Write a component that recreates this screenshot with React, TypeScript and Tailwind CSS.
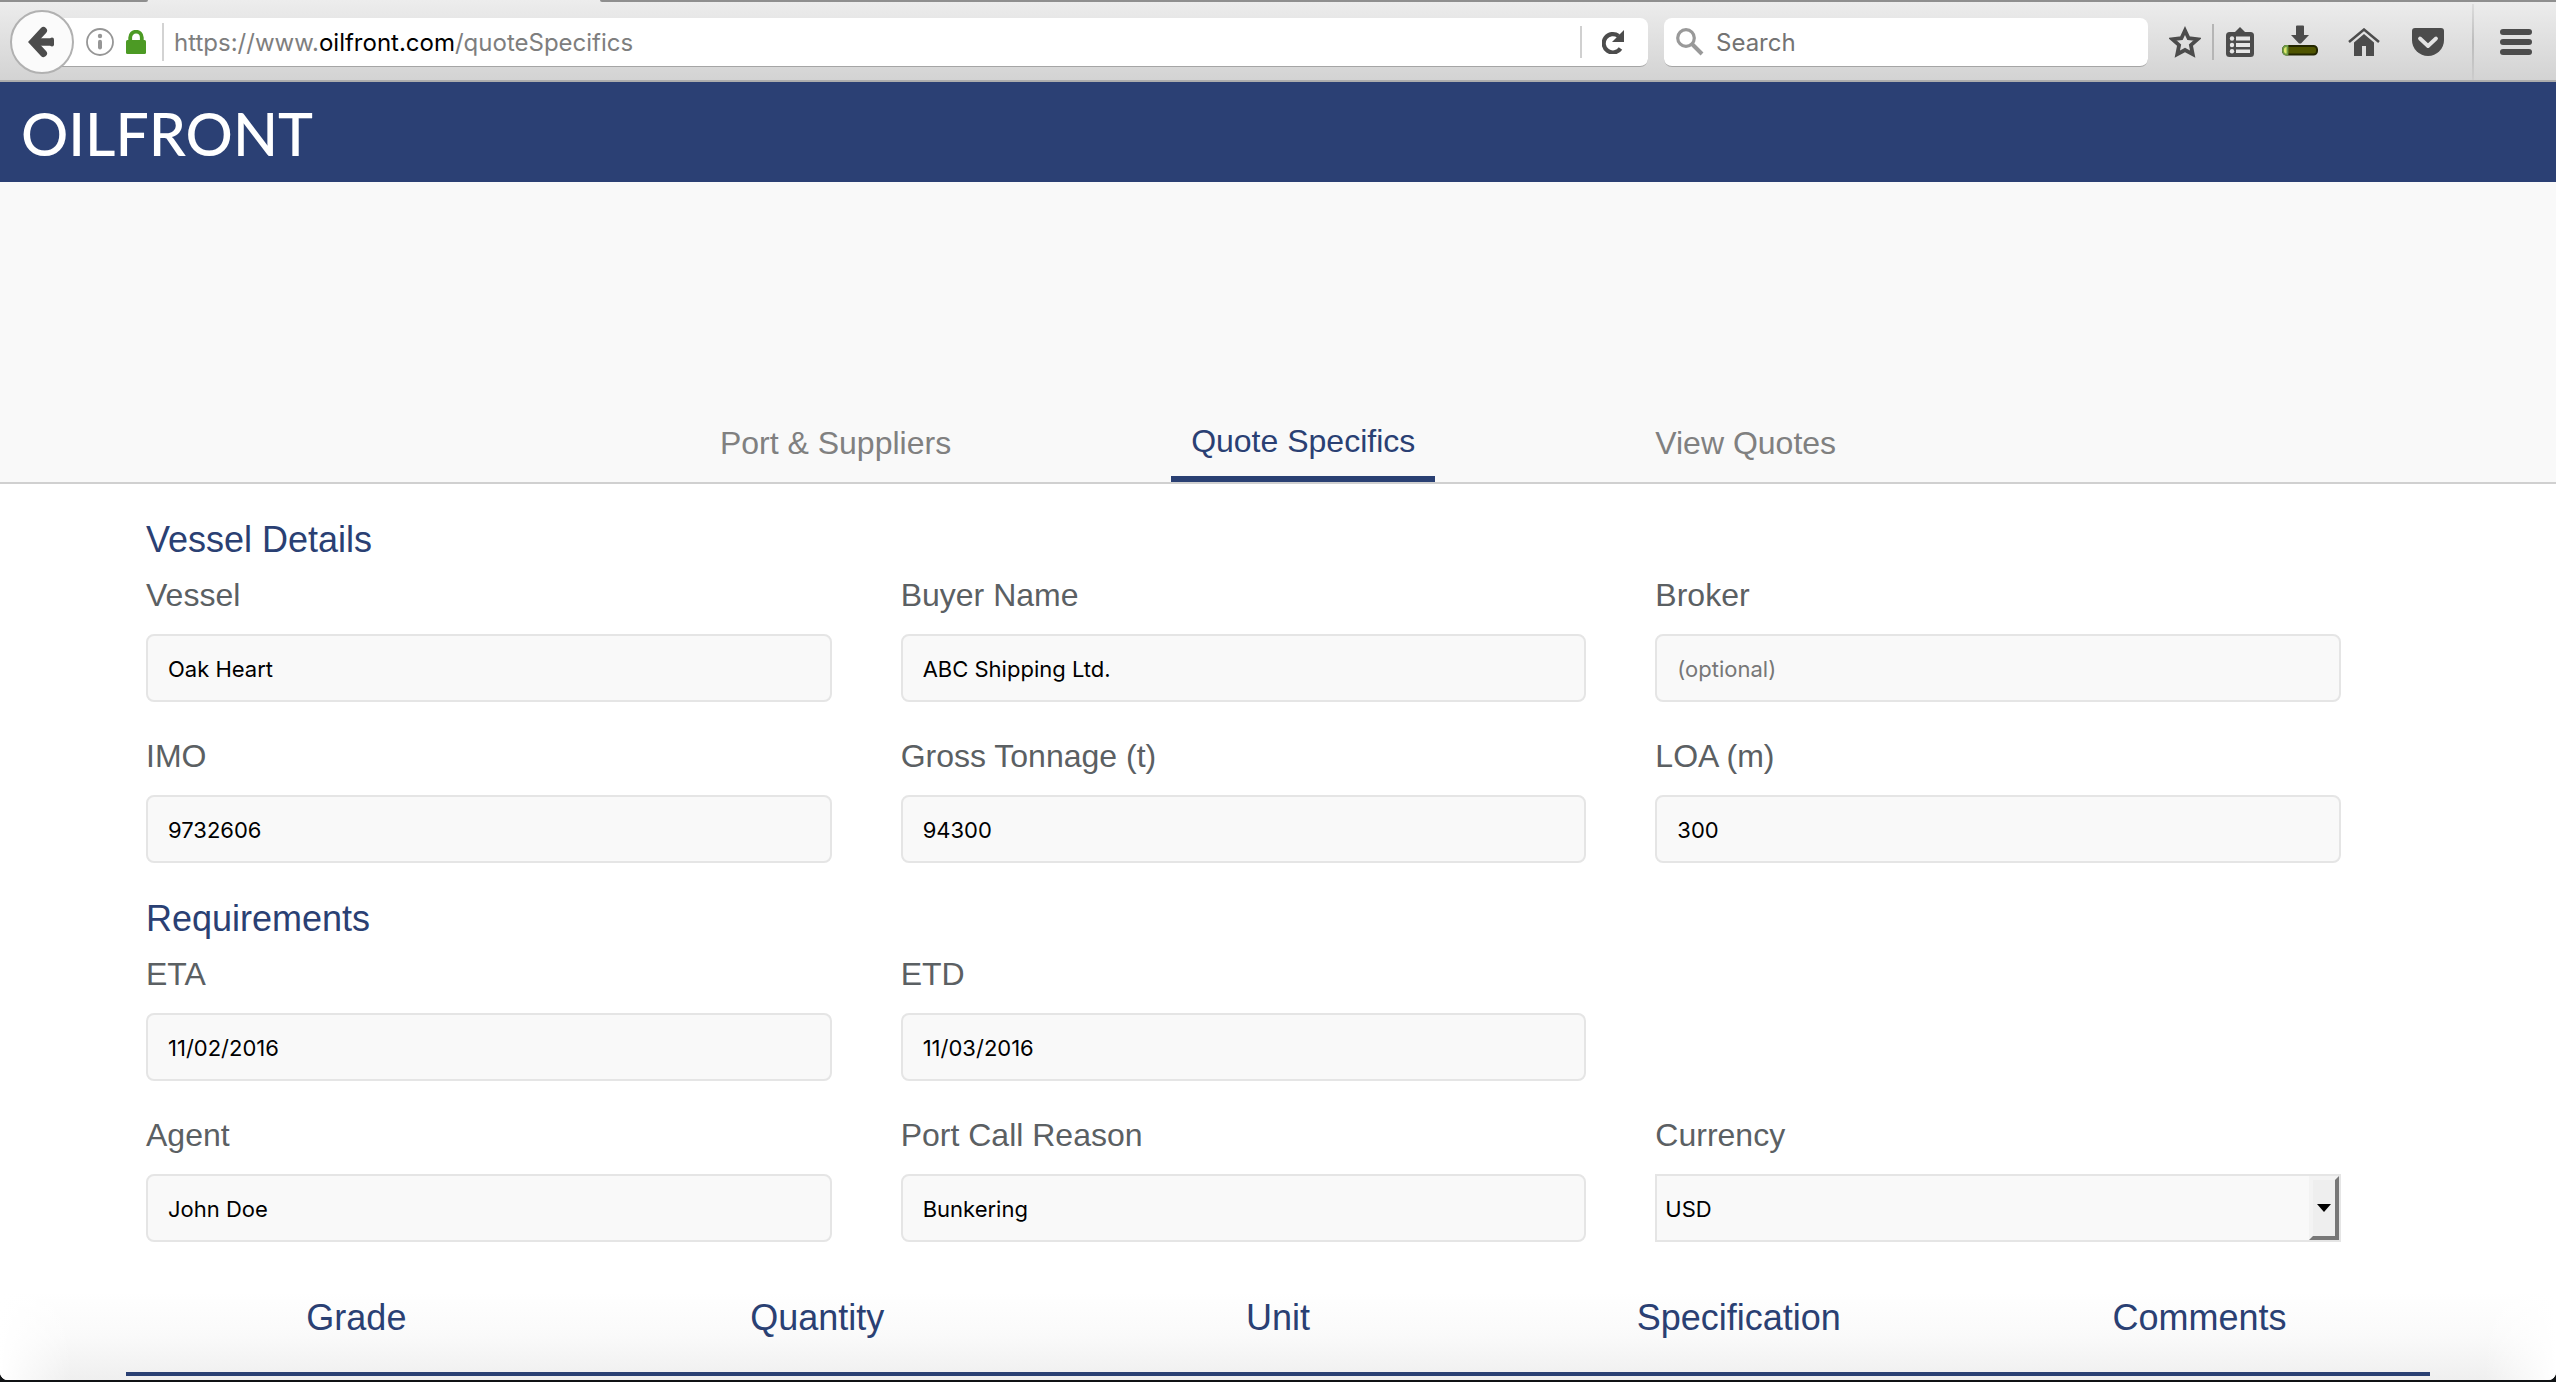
import React from "react";

const heading = "text-[36px] leading-[40px] text-[#2a4073]";

type FieldProps = { id: string; label: string; value?: string; placeholder?: string };

function Label({ id, children }: { id: string; children: React.ReactNode }) {
  return (
    <label htmlFor={id} className="mb-[21px] block text-[32px] leading-[36px] text-[#5b6063]">
      {children}
    </label>
  );
}

function Field({ id, label, value, placeholder }: FieldProps) {
  return (
    <div className="pr-[69px]">
      <Label id={id}>{label}</Label>
      <input
        id={id}
        type="text"
        defaultValue={value}
        placeholder={placeholder}
        className="block h-[68px] w-full rounded-[8px] border-2 border-[#e5e5e5] bg-[#f9f9f9] px-[20px] pt-[2px] font-['Inter',sans-serif] text-[22px] text-black outline-none placeholder:text-[#777]"
      />
    </div>
  );
}

function CurrencyField() {
  return (
    <div className="pr-[69px]">
      <Label id="currency">Currency</Label>
      <div className="relative">
        <select
          id="currency"
          defaultValue="USD"
          className="block h-[68px] w-full appearance-none border-2 border-[#e5e5e5] bg-[#f9f9f9] pt-[2px] pl-2 font-['Inter',sans-serif] text-[22px] text-black outline-none"
        >
          <option>USD</option>
          <option>EUR</option>
        </select>
        <span className="pointer-events-none absolute inset-y-[2px] right-[2px] flex w-[30px] items-center justify-center border-4 border-t-[#f3f3f3] border-r-[#777] border-b-[#777] border-l-[#f3f3f3] bg-[#eee]">
          <svg width="14" height="8" viewBox="0 0 14 8">
            <path d="M0 0h14L7 8z" fill="#000" />
          </svg>
        </span>
      </div>
    </div>
  );
}

function Toolbar() {
  return (
    <div className="relative flex h-[82px] items-center border-b-2 border-[#adadad] bg-linear-to-b from-[#ededed] to-[#d3d3d3] pt-[4px] pl-[10px] font-['Inter',sans-serif] text-[24px]">
      <div className="absolute top-0 left-0 h-[2px] w-[148px] rounded-br-[2px] bg-[#8f8f8f]" />
      <div className="absolute top-0 right-0 left-[600px] h-[2px] rounded-bl-[2px] bg-[#8f8f8f]" />
      <button aria-label="Back" className="z-10 grid size-[64px] shrink-0 place-items-center rounded-full border-2 border-[#b1b1b1] bg-[#fbfbfb]">
        <svg width="28" height="32" viewBox="0 0 28 32" fill="none" stroke="#4c4c4c" strokeWidth="7">
          <path d="M15.500 4.500 4.800 16l10.700 11.500" strokeLinecap="round" strokeLinejoin="miter" />
          <path d="M6 16h19" strokeWidth="7.500" />
          <path d="M24 13.500v5" strokeWidth="4" strokeLinecap="round" />
        </svg>
      </button>
      <div className="mt-[1px] -ml-[20px] flex h-[49px] flex-1 items-center rounded-r-[8px] border-b border-[#a5a5a5] bg-white pl-[32px]">
        <svg width="28" height="28" viewBox="0 0 28 28" className="shrink-0">
          <circle cx="14" cy="14" r="13" fill="none" stroke="#969696" strokeWidth="1.800" />
          <circle cx="14" cy="8" r="2.200" fill="#969696" />
          <path d="M14 13.800v5.600" stroke="#969696" strokeWidth="4" strokeLinecap="round" />
        </svg>
        <svg width="20" height="24" viewBox="0 0 20 24" className="ml-[12px] shrink-0">
          <path d="M4.200 12V7.500a5.800 5.800 0 0 1 11.600 0V12" fill="none" stroke="#4c9a24" strokeWidth="3.800" />
          <rect y="10" width="20" height="14" rx="1.500" fill="#4c9a24" />
        </svg>
        <span className="ml-[16px] h-[38px] w-[2px] bg-[#d3d3d3]" />
        <p className="ml-[10px] flex-1 pt-[2px] whitespace-nowrap text-[#7e7e7e]">
          https://www.<span className="text-black">oilfront.com</span>/quoteSpecifics
        </p>
        <span className="h-[32px] w-[2px] bg-[#d0d0d0]" />
        <button aria-label="Reload" className="mr-[24px] ml-[20px]">
          <svg width="22" height="24" viewBox="0 0 22 24">
            <path d="M18.500 18.500A9.200 9.200 0 1 1 16.500 6" fill="none" stroke="#4c4c4c" strokeWidth="4.200" />
            <path d="M22 0v12H10z" fill="#4c4c4c" />
          </svg>
        </button>
      </div>
      <label className="mt-[1px] ml-[16px] flex h-[49px] w-[484px] items-center rounded-[8px] border-b border-[#a5a5a5] bg-white pl-[12px]">
        <svg width="28" height="28" viewBox="0 0 28 28" fill="none" stroke="#999" className="shrink-0">
          <circle cx="10" cy="10" r="8.300" strokeWidth="3.200" />
          <path d="M16 16l10 10" strokeWidth="4" />
        </svg>
        <input aria-label="Search" placeholder="Search" className="ml-[12px] w-full min-w-0 pt-[2px] outline-none placeholder:text-[#737373]" />
      </label>
      <button aria-label="Bookmark this page" className="ml-[21px]">
        <svg width="32" height="32" viewBox="0 0 32 32" fill="none" stroke="#4c4c4c" strokeWidth="3.800">
          <path d="M16 4.500l3.600 7.700 9 1-6.700 6 1.800 9L16 24l-7.700 4.200 1.800-9-6.700-6 9-1z" />
        </svg>
      </button>
      <span className="ml-[11px] h-[36px] w-[2px] bg-[#b5b5b5]" />
      <button aria-label="Show bookmarks" className="ml-[12px]">
        <svg width="28" height="30" viewBox="0 0 28 30">
          <path d="M8 6l6-6 6 6z" fill="#4c4c4c" />
          <rect x="0" y="5" width="28" height="25" rx="3.500" fill="#4c4c4c" />
          <path d="M10 9.500h14v4H10zM10 16h14v4H10zM10 22.500h14v3.500H10z" fill="#e6e6e6" />
          <g fill="#e6e6e6">
            <circle cx="6" cy="11.500" r="2.200" />
            <circle cx="6" cy="18" r="2.200" />
            <circle cx="6" cy="24.300" r="2.200" />
          </g>
        </svg>
      </button>
      <button aria-label="Downloads" className="mb-[2px] ml-[28px]">
        <svg width="36" height="32" viewBox="0 0 36 32">
          <path d="M14 1.500q0-1 1-1h6q1 0 1 1V10h5l-8 8.500h-2L9 10h5z" fill="#4c4c4c" />
          <rect x="1" y="21" width="34" height="8.500" rx="3.500" fill="#4f5400" stroke="#232600" strokeWidth="2" />
          <path d="M5.500 21H4.500q-3.500 0-3.500 4.200t3.500 4.300h1z" fill="#dce86c" stroke="#6f9b45" strokeWidth="1.800" />
        </svg>
      </button>
      <button aria-label="Home" className="ml-[30px]">
        <svg width="32" height="28" viewBox="0 0 32 28">
          <path d="M1 14 16 1.500 31 14" fill="none" stroke="#4c4c4c" strokeWidth="2.500" />
          <path d="M6 14.500 16 6l10 8.500V28h-8V18h-4v10H6z" fill="#4c4c4c" />
        </svg>
      </button>
      <button aria-label="Save to Pocket" className="ml-[32px]">
        <svg width="32" height="28" viewBox="0 0 32 28">
          <path d="M3 0h26q3 0 3 3v9a16 16 0 0 1-32 0V3q0-3 3-3z" fill="#4c4c4c" />
          <path d="M8 10.500l8 7.500 8-7.500" fill="none" stroke="#e4e4e4" strokeWidth="3.800" strokeLinecap="round" strokeLinejoin="round" />
        </svg>
      </button>
      <span className="ml-[28px] h-full w-[2px] bg-linear-to-b from-[#ddd] via-[#bcbcbc] to-[#ccc]" />
      <button aria-label="Open menu" className="mr-[24px] ml-[26px] flex w-[32px] flex-col gap-[4px]">
        <span className="h-[6px] rounded-full bg-[#4c4c4c]" />
        <span className="h-[6px] rounded-full bg-[#4c4c4c]" />
        <span className="h-[6px] rounded-full bg-[#4c4c4c]" />
      </button>
    </div>
  );
}

export default function App() {
  return (
    <div className="flex min-h-screen flex-col bg-[#101214] pb-[2px] font-['Liberation_Sans',sans-serif]">
      <Toolbar />
      <header className="flex h-[100px] items-center bg-[#2b4074] pl-[21px]">
        <a href="#" className="mt-[2px] font-['Lato',sans-serif] text-[59px] leading-none font-medium text-white">OILFRONT</a>
      </header>
      <nav className="flex items-end justify-center gap-[200px] border-b-2 border-[#d0d0d0] bg-[#f9f9f9] pt-[241px] text-[32px] leading-[36px] text-[#808080]">
        <a href="#" className="px-5 pb-[21px]">Port &amp; Suppliers</a>
        <a href="#" aria-current="page" className="border-b-6 border-[#2a4073] px-5 pb-[17px] text-[#2a4073]">Quote Specifics</a>
        <a href="#" className="px-5 pb-[21px]">View Quotes</a>
      </nav>
      <main className="relative flex-1 overflow-hidden rounded-b-[8px] bg-white px-[126px] pb-1">
        <div className="pointer-events-none absolute inset-x-0 bottom-0 h-[88px] bg-linear-to-b from-white via-[#fafafa] to-[#efefef]" />
        <div className="pointer-events-none absolute bottom-0 left-0 h-[88px] w-[72px] bg-linear-to-r from-white to-transparent" />
        <div className="pointer-events-none absolute right-0 bottom-0 h-[88px] w-[72px] bg-linear-to-l from-white to-transparent" />
        <form className="px-5">
          <section className="pt-[36px]">
            <h2 className={heading}>Vessel Details</h2>
            <div className="mt-[17px] grid grid-cols-3 gap-y-9">
              <Field id="vessel" label="Vessel" value="Oak Heart" />
              <Field id="buyer" label="Buyer Name" value="ABC Shipping Ltd." />
              <Field id="broker" label="Broker" placeholder="(optional)" />
              <Field id="imo" label="IMO" value="9732606" />
              <Field id="tonnage" label="Gross Tonnage (t)" value="94300" />
              <Field id="loa" label="LOA (m)" value="300" />
            </div>
          </section>
          <section className="pt-[36px]">
            <h2 className={heading}>Requirements</h2>
            <div className="mt-[17px] grid grid-cols-3 gap-y-9">
              <Field id="eta" label="ETA" value="11/02/2016" />
              <Field id="etd" label="ETD" value="11/03/2016" />
              <div />
              <Field id="agent" label="Agent" value="John Doe" />
              <Field id="reason" label="Port Call Reason" value="Bunkering" />
              <CurrencyField />
            </div>
          </section>
        </form>
        <table className="relative mt-[56px] w-full table-fixed border-b-4 border-[#2a4073]">
          <thead>
            <tr>
              {["Grade", "Quantity", "Unit", "Specification", "Comments"].map((name) => (
                <th key={name} scope="col" className="p-0 pb-[34px] text-center text-[36px] leading-[40px] font-normal text-[#2a4073]">
                  {name}
                </th>
              ))}
            </tr>
          </thead>
        </table>
      </main>
    </div>
  );
}
